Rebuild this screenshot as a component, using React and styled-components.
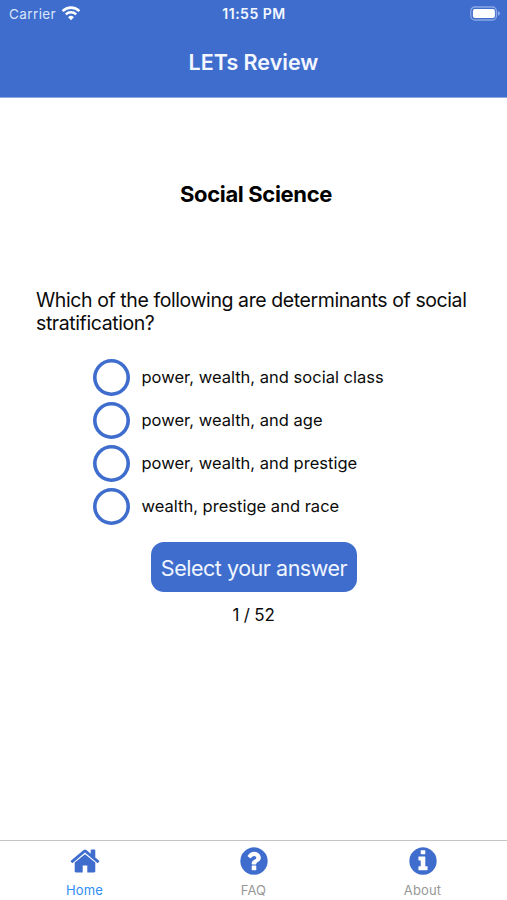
import React from "react";
import styled, { createGlobalStyle } from "styled-components";

const choices = [
  "power, wealth, and social class",
  "power, wealth, and age",
  "power, wealth, and prestige",
  "wealth, prestige and race",
];

const tabs = [
  {
    label: "Home",
    active: true,
    path: "M1472 992v480q0 26-19 45t-45 19h-384v-384h-256v384h-384q-26 0-45-19t-19-45v-480q0-1 .5-3t.5-3l575-474 575 474q1 2 1 6zm223-69l-62 74q-8 9-21 11h-3q-13 0-21-7l-692-577-692 577q-12 8-24 7-13-2-21-11l-62-74q-8-10-7-23.5t11-21.5l719-599q32-26 76-26t76 26l244 204v-195q0-14 9-23t23-9h192q14 0 23 9t9 23v408l219 182q10 8 11 21.5t-7 23.5z",
  },
  {
    label: "FAQ",
    path: "M1024 1376v-192q0-14-9-23t-23-9h-192q-14 0-23 9t-9 23v192q0 14 9 23t23 9h192q14 0 23-9t9-23zm256-672q0-88-55.5-163t-138.5-116-170-41q-243 0-371 213-15 24 8 42l132 100q7 6 19 6 16 0 25-12 53-68 86-92 34-24 86-24 48 0 85.5 26t37.5 59q0 38-20 61t-68 45q-63 28-115.5 86.5t-52.5 125.5v36q0 14 9 23t23 9h192q14 0 23-9t9-23q0-19 21.5-49.5t54.5-49.5q32-18 49-28.5t46-35 44.5-48 28-60.5 12.5-81zm384 192q0 209-103 385.5t-279.5 279.5-385.5 103-385.5-103-279.5-279.5-103-385.5 103-385.5 279.5-279.5 385.5-103 385.5 103 279.5 279.5 103 385.5z",
  },
  {
    label: "About",
    path: "M1152 1376v-160q0-14-9-23t-23-9h-96v-512q0-14-9-23t-23-9h-320q-14 0-23 9t-9 23v160q0 14 9 23t23 9h96v320h-96q-14 0-23 9t-9 23v160q0 14 9 23t23 9h448q14 0 23-9t9-23zm-128-896v-160q0-14-9-23t-23-9h-192q-14 0-23 9t-9 23v160q0 14 9 23t23 9h192q14 0 23-9t9-23zm640 416q0 209-103 385.5t-279.5 279.5-385.5 103-385.5-103-279.5-279.5-103-385.5 103-385.5 279.5-279.5 385.5-103 385.5 103 279.5 279.5 103 385.5z",
  },
];

const WifiIcon = () => (
  <svg width="20" height="15" viewBox="0 0 20 15" fill="none" stroke="#fff">
    <path d="M1.6 5.1a12 12 0 0 1 16.8 0" strokeWidth="2.6" />
    <path d="M4.8 8.4a7.5 7.5 0 0 1 10.4 0" strokeWidth="2.4" />
    <path d="M10 14.2 7.1 11.2a4.2 4.2 0 0 1 5.8 0z" fill="#fff" stroke="none" />
  </svg>
);

const BatteryIcon = () => (
  <svg width="32" height="16" viewBox="0 0 32 16">
    <rect x="1.8" y="1" width="25.6" height="13" rx="4" fill="none" stroke="#8ca8e4" strokeWidth="1.3" />
    <rect x="3.9" y="2.9" width="22" height="9.2" rx="2" fill="#fff" />
    <path d="M28.9 5.1q2.2.9 2.2 2.4t-2.2 2.4z" fill="#8ca8e4" />
  </svg>
);

const App = () => {
  return (
    <Screen>
      <GlobalStyle />
      <Header>
        <StatusBar>
          <Carrier>
            <span>Carrier</span>
            <WifiIcon />
          </Carrier>
          <Clock>11:55 PM</Clock>
          <Battery>
            <BatteryIcon />
          </Battery>
        </StatusBar>
        <HeaderTitle>LETs Review</HeaderTitle>
      </Header>
      <Main>
        <Subject>Social Science</Subject>
        <Question>
          Which of the following are determinants of social stratification?
        </Question>
        <Choices>
          {choices.map((choice) => (
            <Choice key={choice}>
              <Radio />
              <ChoiceText>{choice}</ChoiceText>
            </Choice>
          ))}
        </Choices>
        <AnswerButton>Select your answer</AnswerButton>
        <Progress>1 / 52</Progress>
      </Main>
      <TabBar>
        {tabs.map(({ label, path, active }) => (
          <Tab key={label}>
            <TabIcon viewBox="0 0 1792 1792">
              <path d={path} />
            </TabIcon>
            <TabLabel $active={active}>{label}</TabLabel>
          </Tab>
        ))}
      </TabBar>
    </Screen>
  );
};

export default App;

const GlobalStyle = createGlobalStyle`
  * {
    box-sizing: border-box;
  }
  body {
    margin: 0;
    background: #fff;
    font-family: Inter, "Liberation Sans", sans-serif;
  }
`;

const Screen = styled.div`
  display: flex;
  flex-direction: column;
  height: 900px;
  color: #0b0b0b;
`;

const Header = styled.header`
  height: 98px;
  background-color: #3e6dcd;
  border-bottom: 1px solid #8ba8e2;
  color: #f4f7ff;
`;

const StatusBar = styled.div`
  display: grid;
  grid-template-columns: 1fr auto 1fr;
  align-items: center;
  height: 27px;
  padding: 0 6px 0 9px;
  font-size: 13.5px;
`;

const Carrier = styled.div`
  display: flex;
  align-items: center;
  gap: 5px;
  color: #dbe5fb;
  letter-spacing: 0.4px;
`;

const Clock = styled.div`
  margin-left: -2px;
  font-weight: 600;
  font-size: 14px;
  letter-spacing: 0.5px;
`;

const Battery = styled.div`
  display: flex;
  justify-content: flex-end;
`;

const HeaderTitle = styled.h1`
  margin: 21px 0 0;
  text-align: center;
  font-size: 21.5px;
  font-weight: 600;
  line-height: 28px;
`;

const Main = styled.main`
  flex: 1;
  display: flex;
  flex-direction: column;
  align-items: center;
`;

const Subject = styled.h2`
  margin: 82px 0 0;
  padding-left: 5px;
  font-size: 22px;
  font-weight: 700;
  line-height: 28px;
  letter-spacing: -0.35px;
  color: #000;
`;

const Question = styled.p`
  width: 435px;
  margin: 81px 0 0;
  font-size: 19.5px;
  line-height: 23px;
  letter-spacing: -0.41px;
`;

const Choices = styled.div`
  display: flex;
  flex-direction: column;
  gap: 6px;
  width: 322px;
  margin-top: 24px;
`;

const Choice = styled.label`
  display: flex;
  align-items: center;
  gap: 12px;
`;

const Radio = styled.span`
  width: 37px;
  height: 37px;
  border-radius: 50%;
  box-shadow: inset 0 0 0 3.6px #3e6dcd;
`;

const ChoiceText = styled.span`
  padding-bottom: 1px;
  font-size: 16.5px;
  letter-spacing: 0.01px;
  white-space: nowrap;
`;

const AnswerButton = styled.button`
  width: 206px;
  height: 50px;
  margin-top: 17px;
  padding: 1px 0 0 1px;
  border: 0;
  border-radius: 13px;
  background-color: #3e6dcd;
  color: #f0f5ff;
  font-family: inherit;
  font-size: 21.5px;
  line-height: 50px;
  letter-spacing: -0.47px;
  white-space: nowrap;
`;

const Progress = styled.div`
  margin-top: 12px;
  font-size: 17px;
  line-height: 22px;
  letter-spacing: -0.2px;
`;

const TabBar = styled.nav`
  display: flex;
  height: 60px;
  border-top: 1px solid #c4c4c4;
`;

const Tab = styled.div`
  flex: 1;
  display: flex;
  flex-direction: column;
  align-items: center;
  padding-top: 4px;
`;

const TabIcon = styled.svg`
  width: 32px;
  height: 32px;
  margin-bottom: 4px;
  fill: #3e6dcd;
`;

const TabLabel = styled.span`
  font-size: 13px;
  line-height: 18px;
  letter-spacing: 0.15px;
  color: ${(props) => (props.$active ? "#2f8df5" : "#989898")};
`;
